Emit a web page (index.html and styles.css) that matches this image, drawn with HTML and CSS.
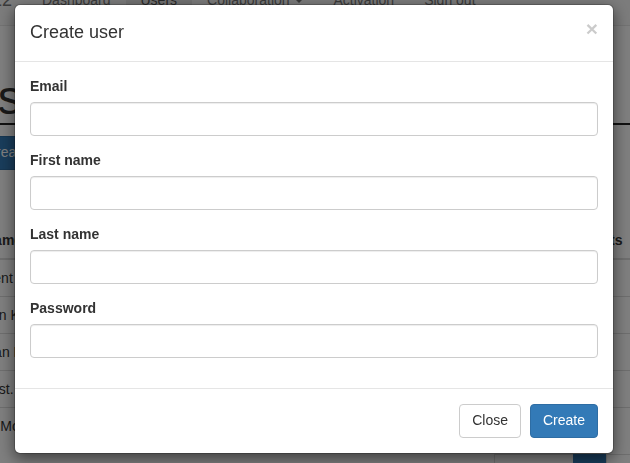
FILE: index.html
```html
<!DOCTYPE html>
<html lang="en">
<head>
<meta charset="utf-8">
<title>Create user</title>
<link rel="stylesheet" href="styles.css">
</head>
<body>
<div class="page">
  <nav class="navbar">
    <span class="brand">v12</span>
    <ul class="nav">
      <li><a href="#">Dashboard</a></li>
      <li class="active"><a href="#">Users</a></li>
      <li><a href="#">Collaboration <span class="caret"></span></a></li>
      <li><a href="#">Activation</a></li>
      <li><a href="#">Sign out</a></li>
    </ul>
  </nav>
  <main class="content">
    <h1 class="page-title">Users</h1>
    <button class="btn btn-primary page-btn" type="button">Create user</button>
    <table class="table">
      <colgroup><col class="c1"><col class="c2"><col class="c3"><col class="c4"></colgroup>
      <thead>
        <tr><th>Name</th><th>Email</th><th>Role</th><th>Rights</th></tr>
      </thead>
      <tbody>
        <tr><td>Kent</td><td>kent@example.com</td><td>User</td><td></td></tr>
        <tr><td>Jan Kowalski</td><td>jan@example.com</td><td>User</td><td></td></tr>
        <tr><td>Dan Fisher</td><td>dan@example.com</td><td>User</td><td></td></tr>
        <tr><td>Test.</td><td>test@example.com</td><td>User</td><td></td></tr>
        <tr><td>Al Moore</td><td>al@example.com</td><td>Admin</td><td></td></tr>
      </tbody>
    </table>
    <ul class="pagination">
      <li><a href="#">Previous</a></li>
      <li class="active"><a href="#">1</a></li>
      <li><a href="#">Next</a></li>
    </ul>
  </main>
</div>

<div class="backdrop"></div>

<div class="modal">
  <div class="modal-header">
    <h4 class="modal-title">Create user</h4>
    <button class="close" type="button" aria-label="Close">&times;</button>
  </div>
  <div class="modal-body">
    <div class="form-group">
      <label for="email">Email</label>
      <input id="email" class="form-control" type="email">
    </div>
    <div class="form-group">
      <label for="first">First name</label>
      <input id="first" class="form-control" type="text">
    </div>
    <div class="form-group">
      <label for="last">Last name</label>
      <input id="last" class="form-control" type="text">
    </div>
    <div class="form-group">
      <label for="password">Password</label>
      <input id="password" class="form-control" type="password">
    </div>
  </div>
  <div class="modal-footer">
    <button class="btn btn-default" type="button">Close</button>
    <button class="btn btn-primary" type="button">Create</button>
  </div>
</div>
</body>
</html>
```

FILE: styles.css
```css
* { box-sizing: border-box; }

html, body {
  margin: 0;
  padding: 0;
  width: 630px;
  height: 463px;
  overflow: hidden;
}

body {
  font-family: "Liberation Sans", Arial, Helvetica, sans-serif;
  font-size: 14px;
  line-height: 1.42857;
  color: #333;
  background: #fff;
}

/* ---------- background page ---------- */
.page { width: 630px; }

.navbar {
  height: 51px;
  margin-top: -25px;
  background: #f8f8f8;
  border-bottom: 1px solid #e7e7e7;
  display: flex;
  white-space: nowrap;
}

.brand {
  font-size: 18px;
  line-height: 20px;
  padding: 15px 0;
  margin-left: -17px;
  color: #777;
  width: 44px;
}

.nav {
  list-style: none;
  margin: 0;
  padding: 0;
  display: flex;
}

.nav a {
  display: block;
  padding: 15px 15px;
  line-height: 20px;
  color: #777;
  text-decoration: none;
}

.nav .active a {
  background: #e7e7e7;
  color: #555;
}

.caret {
  display: inline-block;
  width: 0;
  height: 0;
  margin-left: 2px;
  vertical-align: middle;
  border-top: 4px solid;
  border-left: 4px solid transparent;
  border-right: 4px solid transparent;
}

.content {
  margin-left: -27px;
  width: 720px;
}

.page-title {
  margin: 47px 0 0 0;
  font-size: 48px;
  font-weight: 500;
  line-height: 50px;
  border-bottom: 2px solid #222;
  text-indent: -10px;
  white-space: nowrap;
  overflow: hidden;
}

.page-btn { margin-top: 11px; }

.table {
  margin: 52px 0 0 3px;
  width: 700px;
  border-collapse: collapse;
  table-layout: fixed;
}

.c1 { width: 200px; }
.c2 { width: 220px; }
.c3 { width: 175px; }

.table th,
.table td {
  padding: 8px;
  line-height: 20px;
  text-align: left;
  vertical-align: top;
  white-space: nowrap;
  overflow: hidden;
}

.table th {
  font-weight: bold;
  border-bottom: 2px solid #ddd;
}

.table td { border-top: 1px solid #ddd; }
.table tbody tr:first-child td { border-top: 0; }

.pagination {
  list-style: none;
  display: flex;
  margin: 10px 0 0 0;
  padding: 0 0 0 522px;
}

.pagination a {
  display: block;
  padding: 6px 12px;
  line-height: 20px;
  color: #337ab7;
  text-decoration: none;
  border: 1px solid #ddd;
  margin-left: -1px;
  background: #fff;
}

.pagination .active a {
  background: #337ab7;
  border-color: #337ab7;
  color: #fff;
}

/* ---------- backdrop + modal ---------- */
.backdrop {
  position: fixed;
  inset: 0;
  background: rgba(0, 0, 0, 0.5);
}

.modal {
  position: fixed;
  top: 4px;
  left: 14px;
  width: 600px;
  background: #fff;
  border: 1px solid rgba(0, 0, 0, 0.2);
  border-radius: 6px;
  box-shadow: 0 5px 15px rgba(0, 0, 0, 0.5);
  background-clip: padding-box;
}

.modal-header {
  padding: 15px;
  border-bottom: 1px solid #e5e5e5;
  display: flex;
  justify-content: space-between;
  align-items: flex-start;
}

.modal-title {
  margin: 0;
  font-size: 18px;
  font-weight: normal;
  line-height: 1.42857;
  color: #333;
}

.close {
  margin-top: -2px;
  padding: 0;
  border: 0;
  background: transparent;
  font-family: inherit;
  font-size: 21px;
  font-weight: bold;
  line-height: 1;
  color: #000;
  opacity: 0.2;
  text-shadow: 0 1px 0 #fff;
  cursor: pointer;
}

.modal-body { padding: 15px; }

.form-group { margin-bottom: 15px; }

.form-group label {
  display: block;
  margin-bottom: 5px;
  font-weight: bold;
}

.form-control {
  display: block;
  width: 100%;
  height: 34px;
  padding: 6px 12px;
  font-family: inherit;
  font-size: 14px;
  color: #555;
  background: #fff;
  border: 1px solid #ccc;
  border-radius: 4px;
  box-shadow: inset 0 1px 1px rgba(0, 0, 0, 0.075);
}

.modal-footer {
  padding: 15px;
  border-top: 1px solid #e5e5e5;
  display: flex;
  justify-content: flex-end;
  gap: 9px;
}

.btn {
  display: inline-block;
  padding: 6px 12px;
  font-family: inherit;
  font-size: 14px;
  line-height: 1.42857;
  border: 1px solid transparent;
  border-radius: 4px;
  cursor: pointer;
  white-space: nowrap;
}

.btn-default {
  color: #333;
  background: #fff;
  border-color: #ccc;
}

.btn-primary {
  color: #fff;
  background: #337ab7;
  border-color: #2e6da4;
}
```
